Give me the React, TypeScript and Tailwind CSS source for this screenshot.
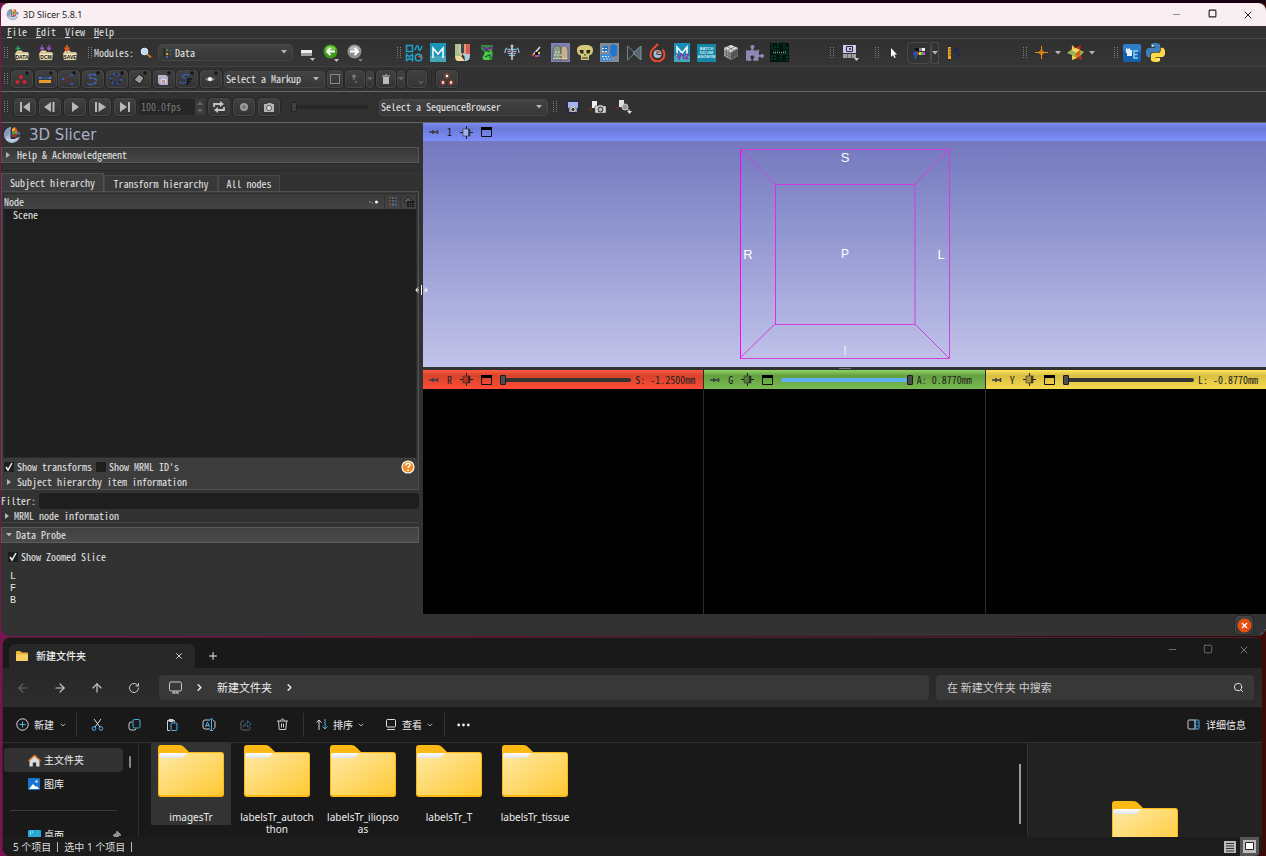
import React from "react";
import {
  ArrowLeft,
  ArrowRight,
  ArrowUp,
  ChevronDown,
  ChevronRight,
  Minus,
  Plus,
  RotateCw,
  Search,
  Square,
  X,
} from "lucide-react";
import { FaPuzzlePiece } from "react-icons/fa";

type Kids = { children?: React.ReactNode };

const Svg: React.FC<Kids & { w: number; h: number; vb?: string }> = ({ w, h, vb, children }) => (
  <svg width={w} height={h} viewBox={vb || `0 0 ${w} ${h}`} fill="none" className="shrink-0" aria-hidden="true">
    {children}
  </svg>
);

const Handle = () => (
  <Svg w={4} h={12}>
    <path d="M0.5 0v12M3.5 0v12" stroke="#7d7d7d" strokeDasharray="1 1" />
  </Svg>
);

const Caret: React.FC<{ color?: string }> = ({ color = "#b5b5b5" }) => (
  <Svg w={6} h={4}>
    <path d="M0 0h6L3 3.5z" fill={color} />
  </Svg>
);

/* ---------- logo ---------- */
const SlicerLogo: React.FC<{ size: number }> = ({ size }) => (
  <Svg w={size} h={size} vb="0 0 18 18">
    <path d="M8 1a8 8 0 1 0 9 9.5l-5 2.5H8z" fill="#a9b8d4" />
    <path d="M8 1a8 8 0 0 0-6.5 11L6 9z" fill="#8c9bbb" />
    <path d="M8 3v9l6-1" stroke="#2b3348" />
    <path d="M9 3l3-2v3.5L9 6z" fill="#f2b32c" />
    <path d="M12 1l2 2v3l-2-1.5z" fill="#d84228" />
    <path d="M9 6l3-1.5V8l-3 1.5z" fill="#4c9c3c" />
    <path d="M12 4.5h2.5V8H12z" fill="#e5702b" />
    <path d="M14.5 6H17v3h-2.5z" fill="#2f74c0" />
    <path d="M9.5 9.5L14 8.5v2l-4.500.5z" fill="#d12f2f" />
    <path d="M4 13c3 2 7 2 10-1" stroke="#e4eaf5" />
  </Svg>
);

/* ---------- first toolbar ---------- */
const Drawer: React.FC<{ label: string; children: React.ReactNode }> = ({ label, children }) => (
  <Svg w={16} h={16}>
    <path d="M2 7l1.5-1.5h4L9 7h5v8H2z" fill="#e9d9a8" />
    <path d="M1 8h14l-1 7H2z" fill="#f6ebc8" stroke="#8f7a48" strokeWidth="0.5" />
    <text x="8" y="13.5" fontSize="5" fontWeight="bold" fontFamily="Liberation Sans, sans-serif" textAnchor="middle" fill="#111">
      {label}
    </text>
    {children}
  </Svg>
);

const Magnifier = () => (
  <Svg w={12} h={12}>
    <path d="M7 7l4 3.5" stroke="#c87a2c" strokeWidth="2" />
    <circle cx="4.5" cy="4.5" r="3.3" fill="#b9dcf8" stroke="#e8eef6" />
  </Svg>
);

const WindowDrop = () => (
  <Svg w={16} h={18}>
    <path d="M2 6h11v6H2z" fill="#eee" />
    <path d="M2 9h11v3H2z" fill="#9c9c9c" />
    <path d="M11 14h5l-2.5 3z" fill="#c4c4c4" />
  </Svg>
);

const RoundArrow: React.FC<{ back?: boolean }> = ({ back }) => (
  <Svg w={16} h={18}>
    <circle cx="7.5" cy="7.5" r="7" fill={back ? "#3f9a1c" : "#8e8e8e"} />
    <path d="M2 5a6 5 0 0 1 11 0c-3 2-8 2-11 0z" fill={back ? "#7ccf4e" : "#b9b9b9"} />
    <path
      d={back ? "M12 7.500H4M7.500 4L4 7.500 7.500 11" : "M3 7.500h8M7.500 4L11 7.500 7.500 11"}
      stroke="#fff"
      strokeWidth="2"
    />
    <path d="M11 15h5l-2.5 3z" fill={back ? "#c4c4c4" : "#777"} />
  </Svg>
);

const ModuleShapes = () => (
  <Svg w={18} h={18}>
    <path
      d="M1.5 1.5h6v6h-6zM10 6c2-6 3-5 3.5-2s1.500 4 3.5-2M1.5 16.5v-6l3 2 3-2v6l-3-2z"
      stroke="#1ba3c9"
      strokeWidth="1.5"
    />
    <circle cx="13.5" cy="13.5" r="3.3" stroke="#1ba3c9" strokeWidth="1.5" />
    <path d="M13 13l2-2 1.5 1.5L15 14z" fill="#e0552c" />
  </Svg>
);

const MonaiLetter: React.FC<{ viz?: boolean }> = ({ viz }) => (
  <Svg w={16} h={19}>
    <path d="M0 0h16v19H0z" fill={viz ? "#178fb4" : "#1b95b5"} />
    <path d="M0 13h16v6H0z" fill="#44a6bb" />
    {viz ? (
      <>
        <path d="M3 13V4l5 6 5-6v9" stroke="#fff" strokeWidth="1.5" />
        <path d="M2.5 10L5 16l2.5-6M9.500 11v5M11.500 11.500h3l-3 4h3" stroke="#8d2fa0" strokeWidth="1.3" />
      </>
    ) : (
      <path d="M3 15V5l5 6 5-6v10" stroke="#fff" strokeWidth="1.5" />
    )}
  </Svg>
);

const BlocksU = () => (
  <Svg w={18} h={19}>
    <path d="M1 1h7v12H1z" fill="#a9c08f" />
    <path d="M9 1h7v12H9z" fill="#d9604b" />
    <path d="M1 13h6l4 5H4c-2 0-3-2-3-5z" fill="#f0d79c" />
    <path d="M10 11h6c0 5-1 7-5 7z" fill="#a9cfe0" />
    <path d="M6 1v10h5V1" stroke="#d8d2c6" />
    <path d="M7 1h3v9H7z" fill="#444" />
  </Svg>
);

const Pirate = () => (
  <Svg w={14} h={17}>
    <path d="M1 1h12v3l-1 2 1 3-1 7H3l-1-3 3-4-4-4z" fill="#2f8f3d" />
    <path d="M1 2l6 2 6-2-1 3-7 1z" fill="#6b2a9a" />
    <path d="M5 8l6-2 1 5-3 5H4l-1-2z" fill="#4fd03a" />
    <path d="M5 6l5 2M5 13l4-2M10 10v4" stroke="#1d3a6b" strokeWidth="1.2" />
    <path d="M9 5h2v1H9z" fill="#e23a2a" />
  </Svg>
);

const Torso = () => (
  <Svg w={16} h={17}>
    <path d="M3 4c-2 1-2 3-2 5M13 4c2 1 2 3 2 5" stroke="#9fb5c4" strokeWidth="1.2" />
    <path d="M3 4h10l-1 7-4 3-4-3z" fill="#33586b" />
    <path d="M3.5 5.5h9M3.500 7.500h9M4 9.500h8M5 11.500h6" stroke="#8fb3c6" />
    <path d="M8 1v15" stroke="#c4d3db" strokeWidth="1.5" />
    <path d="M6 6l2 2M10 8l-1 2" stroke="#c13a46" strokeWidth="1.5" />
    <circle cx="8" cy="2" r="1.5" fill="#b9ccd6" />
  </Svg>
);

const Pen = () => (
  <Svg w={12} h={14}>
    <path d="M3 9l7-8" stroke="#e4e4e4" strokeWidth="1.5" />
    <path d="M1 9l3-1-1 3z" fill="#c23c3c" />
    <path d="M5 6h3v3H5z" fill="#111" />
    <path d="M8 6h2v2H8z" fill="#e5c12c" />
    <path d="M5 9h3v2H5z" fill="#cc4d7b" />
    <path d="M8 8h2v3H8z" fill="#3b57c5" />
  </Svg>
);

const Tombs = () => (
  <Svg w={19} h={19}>
    <path d="M0 0h19v19H0z" fill="#8180bd" />
    <path d="M2 17V7c0-6 8-6 8 0v10z" fill="#8b9c86" stroke="#56605a" />
    <path d="M10 17V6c1-5 7-4 7 2v9z" fill="#c5b28c" stroke="#6b6450" />
    <path d="M4 9h5M3 12h8M2 15.5h15" stroke="#dfe3d8" strokeDasharray="2 1" />
  </Svg>
);

const Skull = () => (
  <Svg w={18} h={17}>
    <path d="M9 1C3 1 1 3 1 6c0 4 2 5 4 5.5V16h8v-4.500C15 11 17 10 17 6c0-3-2-5-8-5z" fill="#d3c87c" />
    <path d="M3.500 6h4v3.500h-3zM10.500 6h4l-1 3.500h-3zM9 9.500l1 2H8zM6 13.500h6v1H6z" fill="#2b2a1a" />
  </Svg>
);

const BluePatch = () => (
  <Svg w={19} h={19}>
    <path d="M0 0h19v19H0z" fill="#7f8c98" />
    <path d="M3 3h5v5H3zM10 3l3-2 4 2v9l-4 2-3-3z" fill="#2173cf" />
    <path d="M1 11h10v7H1z" fill="#3c8ad8" />
    <path d="M2 5.5h6M2 8.500h5M2 13.500h7M3 16h7" stroke="#dce6ee" strokeDasharray="2 1" />
  </Svg>
);

const Bowtie = () => (
  <Svg w={16} h={16}>
    <path d="M1.5 1v14L9 8z" stroke="#73838d" />
    <path d="M15 1L7 8l8 7z" fill="#56666f" stroke="#8294a0" />
  </Svg>
);

const Flame = () => (
  <Svg w={17} h={19}>
    <path d="M9 1L4 6a7 7 0 1 0 9.500.5" stroke="#ee4c2c" strokeWidth="2" />
    <circle cx="8.5" cy="11" r="4" fill="#aeb9cd" />
    <path d="M8 8v3.5h4" stroke="#333b50" />
    <path d="M9 8h2v2H9z" fill="#de5b2f" />
  </Svg>
);

const BatchTile = () => (
  <Svg w={19} h={18}>
    <path d="M0 0h19v18H0z" fill="#1586a8" />
    <g fontSize="4" fontWeight="bold" fontFamily="Liberation Sans, sans-serif" textAnchor="middle" fill="#d5eef5">
      <text x="9.5" y="6">BATCH</text>
      <text x="9.5" y="10">DICOM</text>
      <text x="9.5" y="14">ANONYM</text>
    </g>
  </Svg>
);

const GrayCube = () => (
  <Svg w={16} h={17}>
    <path d="M8 1l7 3v8l-7 4-7-4V4z" fill="#a9a9a9" />
    <path d="M8 8l7-4v8l-7 4z" fill="#6c6c6c" />
    <path d="M8 1l7 3-7 4-7-4z" fill="#dadada" />
    <path
      d="M1 7l7 4 7-4M1 9.5L8 13.500l7-4M3.500 5.500v8M6 7v8M10.500 7v8M13 5v8M4 2.500l7 4M12 2.500l-7 4M8 8v8"
      stroke="#333"
      strokeWidth="0.5"
    />
  </Svg>
);

const MatrixTile = () => (
  <Svg w={19} h={19}>
    <path d="M0 0h19v19H0z" fill="#03150f" />
    <path d="M2 1v6M5 3v14M8 0v8M11 11v7M14 1v12M17 4v14M2 12v6" stroke="#0b5640" strokeDasharray="2 1" />
    <path d="M3 9.5h13" stroke="#7d9a90" strokeDasharray="1 1" strokeWidth="1.5" />
  </Svg>
);

const LayoutIcon = () => (
  <Svg w={17} h={17}>
    <path d="M1 1h13v8H1z" fill="#c9c9ee" />
    <path d="M4.5 2.5h6v5h-6z" stroke="#2a2a3a" />
    <path d="M7 4h2v2H7z" fill="#444" />
    <path d="M1 10h4v4H1zM5.5 10h4v4h-4zM10 10h4v4h-4z" fill="#9f9f9f" />
    <path d="M12 14h5l-2.5 3z" fill="#d0d0d0" />
  </Svg>
);

const Pointer = () => (
  <Svg w={12} h={12}>
    <path d="M4 1v9l2-2 1.5 3 1.200-.6L7.300 7.500H10z" fill="#fff" />
  </Svg>
);

const WindowLevel = () => (
  <Svg w={12} h={12}>
    <path d="M2 1h10v3H2z" fill="#111" />
    <path d="M6 1h3v3H6z" fill="#888" />
    <path d="M9 1h3v3H9z" fill="#eee" />
    <path d="M4 5h2v3H4z" fill="#e22" />
    <path d="M6 5h2v3H6z" fill="#dd2" />
    <path d="M8 5h2v3H8z" fill="#2c5" />
    <path d="M10 5h2v3h-2z" fill="#d3d" />
    <path d="M2.5 12V6M0 8l2.500-3L5 8" stroke="#2b57c9" strokeWidth="1.5" />
  </Svg>
);

const RulerCurve = () => (
  <Svg w={14} h={14}>
    <path d="M1 1h3v12H1z" fill="#e8a331" />
    <path d="M2 3h2M2 6h2M2 9h2" stroke="#7a4e0c" />
    <path d="M12 3C8 1 6 5 9 6s5 4 0 5" stroke="#1b2268" strokeWidth="1.5" strokeDasharray="2 1" />
  </Svg>
);

const Crosshair = () => (
  <Svg w={13} h={13}>
    <path d="M6.5 0v13M0 6.5h13" stroke="#ef8a12" />
    <circle cx="6.5" cy="6.5" r="2" stroke="#ef8a12" />
  </Svg>
);

const StarIcon = () => (
  <Svg w={17} h={17}>
    <path d="M5 1l3 3 6-3-1 5 4 2-3 3 1 5-5-2-5 2v-5L0 9l4-3z" fill="#c3281f" />
    <path d="M0 9l4-3 4-2 5 2 4 2-3 3-5 3-4-3z" fill="#8fb651" />
    <path d="M5 1l3 3-3 3zM10 14l-5 2v-5z" fill="#e8d14b" />
    <path d="M5 6l4-2 4 2-4 3z" fill="#f0d964" />
    <path d="M9 9l4-3v5l-4 2z" fill="#e1571f" />
  </Svg>
);

const Extension = () => (
  <Svg w={18} h={18}>
    <rect width="18" height="18" rx="2" fill="#1560ae" />
    <rect width="18" height="8" rx="2" fill="#2f7cc8" />
    <path d="M3 4l2 1 2-1v2h2v6H4V9H3z" fill="#e4edf6" />
    <path d="M15 7h-4v7h4M11 10.500h3.500" stroke="#7fd6e8" strokeWidth="1.5" />
  </Svg>
);

const snake =
  "M14.25.18l.9.2.73.26.59.3.45.32.34.34.25.34.16.33.1.3.04.26.02.2-.01.13V8.5l-.05.63-.13.55-.21.46-.26.38-.3.31-.33.25-.35.19-.35.14-.33.1-.3.07-.26.04-.21.02H8.77l-.69.05-.59.14-.5.22-.41.27-.33.32-.27.35-.2.36-.15.37-.1.35-.07.32-.04.27-.02.21v3.06H3.17l-.21-.03-.28-.07-.32-.12-.35-.18-.36-.26-.36-.36-.35-.46-.32-.59-.28-.73-.21-.88-.14-1.05-.05-1.23.06-1.22.16-1.04.24-.87.32-.71.36-.57.4-.44.42-.33.42-.24.4-.16.36-.1.32-.05.24-.01h.16l.06.01h8.16v-.83H6.18l-.01-2.75-.02-.37.05-.34.11-.31.17-.28.25-.26.31-.23.38-.2.44-.18.51-.15.58-.12.64-.1.71-.06.77-.04.84-.02 1.27.05z";

const PythonIcon = () => (
  <Svg w={19} h={19} vb="0 0 24 24">
    <path d={snake} fill="#3f7fb5" />
    <path d={snake} fill="#ffd848" transform="rotate(180 12 12)" />
    <circle cx="8.5" cy="3.2" r="1.1" fill="#fff" />
    <circle cx="15.5" cy="20.8" r="1.1" fill="#fff" />
  </Svg>
);

/* ---------- second toolbar ---------- */
const markups: { name: string; art: React.ReactNode }[] = [
  {
    name: "Point list",
    art: (
      <g fill="#d8232c">
        <circle cx="7" cy="6" r="2" />
        <circle cx="3.5" cy="11" r="2" />
        <circle cx="10.5" cy="11" r="2" />
      </g>
    ),
  },
  {
    name: "Line",
    art: (
      <>
        <path d="M1 9h12v3H1z" fill="#e89b28" />
        <path d="M2 7h10" stroke="#2c62c8" />
        <path d="M1 6h2v2H1zM11 6h2v2h-2z" fill="#3f7ff0" />
      </>
    ),
  },
  {
    name: "Angle",
    art: (
      <>
        <path d="M11 4L3 8l8 5" stroke="#8c2f3c" strokeDasharray="2 1" />
        <path d="M10 3h2v2h-2zM1 7h2v2H1zM10 12h2v2h-2z" fill="#2d5fd6" />
      </>
    ),
  },
  {
    name: "Open curve",
    art: (
      <>
        <path d="M11 4C4 2 1 6 6 7s8 2 4 5-7 1-8 0" stroke="#666" />
        <path d="M11 4C4 2 1 6 6 7s8 2 4 5-7 1-8 0" stroke="#2d66dc" strokeWidth="2" strokeDasharray="2 3" />
      </>
    ),
  },
  {
    name: "Closed curve",
    art: (
      <>
        <circle cx="7" cy="8" r="5" stroke="#222" />
        <circle cx="7" cy="8" r="5" stroke="#2d55d0" strokeWidth="2" strokeDasharray="2 3" />
      </>
    ),
  },
  { name: "Plane", art: <path d="M7 3l5 4-4 6-6-4z" fill="#9a9a9a" stroke="#151515" /> },
  {
    name: "ROI",
    art: (
      <>
        <path d="M2 4h8l2 2v8H4l-2-2z" fill="#b9b3c9" />
        <path d="M4 7h7v6H4z" fill="#d9d3df" stroke="#9aa0c4" />
        <path d="M6 9h3v3H6z" fill="#c98f8f" />
      </>
    ),
  },
  {
    name: "Landmark curve",
    art: (
      <>
        <path d="M10 4C4 2 1 6 5 7s4 2 2 4-5 1-6 0" stroke="#2d66dc" strokeWidth="1.5" strokeDasharray="2 1" />
        <path d="M8.5 14V8H13M9 10.500h3" stroke="#111" strokeWidth="1.5" />
      </>
    ),
  },
  {
    name: "Eye",
    art: (
      <>
        <path d="M2 8c3-2 7-2 10 0-3 3-7 3-10 0z" fill="#8a8a8a" />
        <circle cx="7" cy="8" r="2" fill="#fff" />
      </>
    ),
  },
];

const toolBtn =
  "flex items-center justify-center rounded-sm border border-[#474747] bg-linear-to-b from-[#414141] to-[#343434] shadow-[0_0_0_1px_#262626]";

const pixelText = "font-['Noto_Sans_CJK_SC','Liberation_Mono',monospace] text-[10px] leading-3 [font-feature-settings:'hwid']";

const Tool: React.FC<Kids & { label: string; w?: string }> = ({ label, w = "w-[22px]", children }) => (
  <button aria-label={label} className={`${toolBtn} ${w} h-[18px] shrink-0`}>
    {children}
  </button>
);

const Combo: React.FC<{ label: string; value: string; width: string; pad?: string; icon?: React.ReactNode }> = ({
  label,
  value,
  width,
  pad = "pl-0.5",
  icon,
}) => (
  <div className={`relative ${width} shrink-0`}>
    {icon && <span className="absolute left-1 top-0.5">{icon}</span>}
    <select
      aria-label={label}
      className={`${pad} block h-[17px] w-full appearance-none rounded-sm border border-[#474747] bg-linear-to-b from-[#434343] to-[#373737] text-[#e6e6e6] ${pixelText}`}
    >
      <option>{value}</option>
    </select>
    <span className="pointer-events-none absolute right-1.5 top-1.5">
      <Caret />
    </span>
  </div>
);

const playback: { name: string; d: string }[] = [
  { name: "First frame", d: "M1 1h2v10H1zM11 1v10L4 6z" },
  { name: "Previous frame", d: "M7 1v10L0 6zM8.5 1h2v10h-2z" },
  { name: "Play", d: "M3 1v10l7-5z" },
  { name: "Next frame", d: "M1 1h2v10H1zM4.5 1v10L12 6z" },
  { name: "Last frame", d: "M1 1v10l7-5zM9 1h2v10H9z" },
];

/* ---------- view headers ---------- */
const Pin = () => (
  <Svg w={10} h={8}>
    <path d="M0 4h4M4 2v4M4 4h4M8.5 2v4" stroke="#3b3b42" strokeWidth="1.5" />
  </Svg>
);

const Target: React.FC<{ fill: string }> = ({ fill }) => (
  <Svg w={13} h={13}>
    <path d="M6.5 0v13M0 6.500h13" stroke="#1d1d24" />
    <path d="M3 3h7v7H3z" fill={fill} stroke="#2e2e2e" strokeOpacity="0.6" />
    <path d="M8 3h2v7H8z" fill="#1c1c1c" fillOpacity="0.7" />
  </Svg>
);

const Maximize = () => (
  <Svg w={11} h={10}>
    <path d="M0.5 0.5h10v9h-10z" stroke="#111" />
    <path d="M0 0h11v3H0z" fill="#000" />
  </Svg>
);

const slices = [
  { id: "R", bar: "from-[#ff5a43] via-[#d8432c] to-[#ff4d36]", tone: "#b43120", label: "S: -1.2500mm", full: false },
  { id: "G", bar: "from-[#8ed463] via-[#649f40] to-[#78bb52]", tone: "#4f7f33", label: "A: 0.8770mm", full: true },
  { id: "Y", bar: "from-[#ffe65c] via-[#d8bf42] to-[#f7da4e]", tone: "#ad9838", label: "L: -0.8770mm", full: false },
];

const rangeBase =
  "h-3 min-w-0 flex-1 appearance-none bg-transparent [&::-webkit-slider-runnable-track]:h-1 [&::-webkit-slider-runnable-track]:rounded-full [&::-webkit-slider-thumb]:-mt-[3px] [&::-webkit-slider-thumb]:h-2.5 [&::-webkit-slider-thumb]:w-1.5 [&::-webkit-slider-thumb]:appearance-none [&::-webkit-slider-thumb]:rounded-[1px] [&::-webkit-slider-thumb]:border [&::-webkit-slider-thumb]:border-[#1c1c1c] [&::-webkit-slider-thumb]:bg-[#4d4d4d]";

const Check: React.FC<{ label: string; on?: boolean }> = ({ label, on }) => (
  <label className="flex items-center gap-[3px]">
    <span className="relative flex size-2.5">
      <input type="checkbox" defaultChecked={on} className="peer size-2.5 appearance-none bg-[#1e1e1e]" />
      <svg viewBox="0 0 10 10" fill="none" className="absolute inset-0 hidden peer-checked:block">
        <path d="M2 5l2 3 4-7" stroke="#eee" strokeWidth="1.5" />
      </svg>
    </span>
    {label}
  </label>
);

const Side = () => (
  <Svg w={5} h={6}>
    <path d="M0 0v6l4-3z" fill="#b5b5b5" />
  </Svg>
);

const LeftPanel = () => (
  <div className="flex w-[422px] shrink-0 flex-col pr-1">
    <div className="flex h-6 items-center gap-2 pl-0.5">
      <SlicerLogo size={18} />
      <h1 className="font-['DejaVu_Sans',sans-serif] text-[15px] leading-5 text-[#a7b0c6]">3D Slicer</h1>
    </div>
    <button className="flex h-4 items-center gap-1.5 border border-[#585858] bg-linear-to-b from-[#373737] to-[#464646] pl-1">
      <Side /> Help &amp; Acknowledgement
    </button>
    <div className="mb-0.5 h-2 border border-[#2a2a2a]" />

    <div role="tablist" className="flex items-end">
      <button role="tab" aria-selected="true" className="h-[18px] w-[103px] border border-b-0 border-[#535353] bg-[#3d3d3d]">
        Subject hierarchy
      </button>
      <button role="tab" className="h-4 w-[114px] border border-b-0 border-[#484848] bg-[#383838]">
        Transform hierarchy
      </button>
      <button role="tab" className="h-4 w-[62px] border border-b-0 border-[#484848] bg-[#383838]">
        All nodes
      </button>
    </div>
    <div className="flex flex-col border border-[#505050] bg-[#3c3c3c] p-px">
      <div className="h-[265px] border border-[#2c2c2c] bg-[#1e1e1e]">
        <table className="w-full">
          <thead>
            <tr className="h-[15px] bg-linear-to-b from-[#3a3a3a] to-[#444]">
              <th className="p-0 text-left font-normal">Node</th>
              <th className="w-4 p-0" aria-label="Visibility">
                <Svg w={12} h={6}>
                  <path d="M1 3h2M4 4h1" stroke="#999" />
                  <circle cx="8.5" cy="3" r="1.5" fill="#fff" />
                </Svg>
              </th>
              <th className="w-4 border-l border-[#333] p-0 pl-1" aria-label="Color">
                <Svg w={8} h={9}>
                  <path d="M1 0v9" stroke="#8a3a48" strokeWidth="2" />
                  <path d="M4 0v9" stroke="#377a60" strokeWidth="2" />
                  <path d="M7 0v9" stroke="#5a4c9c" strokeWidth="2" />
                  <path d="M0 2.5h8M0 5.500h8" stroke="#333" />
                </Svg>
              </th>
              <th className="w-4 border-l border-[#333] p-0 pl-0.5" aria-label="Transform">
                <Svg w={12} h={11}>
                  <path d="M5 1l5 4-5 4-4-4z" fill="#555" stroke="#222" />
                  <path d="M4 5h7v6H4z" fill="#111" />
                  <path d="M4 7.5h7M4 9.500h7M6.500 5v6M8.500 5v6" stroke="#555" strokeWidth="0.5" />
                </Svg>
              </th>
            </tr>
          </thead>
          <tbody>
            <tr className="h-3">
              <td colSpan={4} className="p-0 pl-[9px] leading-[10px]">
                Scene
              </td>
            </tr>
          </tbody>
        </table>
      </div>
      <div className="flex h-[17px] items-center gap-1 pr-0.5 pl-px">
        <Check label="Show transforms" on />
        <Check label="Show MRML ID's" />
        <button aria-label="Help" className="ml-auto flex">
          <Svg w={14} h={14}>
            <circle cx="7" cy="7" r="6" fill="#f28c1e" stroke="#fff" strokeWidth="1.2" />
            <path d="M5 5.5c0-3 4-3 4-.5 0 1.500-2 1.500-2 3M7 9.500V11" stroke="#fff" strokeWidth="1.5" />
          </Svg>
        </button>
      </div>
      <button className="flex h-[13px] items-center gap-[5px] pl-1">
        <Side /> Subject hierarchy item information
      </button>
    </div>
    <div className="flex items-center gap-[3px] pt-[3px]">
      <label htmlFor="filter">Filter:</label>
      <input id="filter" className="h-4 min-w-0 flex-1 rounded-sm bg-[#1e1e1e] px-1 outline-none" />
    </div>
    <button className="mb-1 flex h-3.5 items-center gap-1 border-b border-[#444] pl-1">
      <Side /> MRML node information
    </button>
    <button className="flex h-4 items-center gap-1 border border-[#5c5c5c] bg-linear-to-b from-[#404040] to-[#4b4b4b] pl-1">
      <Caret /> Data Probe
    </button>
    <div className="pt-2 pl-[7px]">
      <Check label="Show Zoomed Slice" on />
      <ul className="pt-2 pl-0.5 font-['Liberation_Mono',monospace]">
        <li>L</li>
        <li>F</li>
        <li>B</li>
      </ul>
    </div>
  </div>
);

const Cube = () => (
  <Svg w={212} h={212}>
    <g stroke="#cf3fdc">
      <path d="M1 1.5h209.500v209H1.500M36 36.500h140v140H36M1 1l35 35M210 1l-34 35M1 210l35-34M210 210l-34-34" />
      <path d="M36.5 36v140" stroke="#e82ae8" />
      <path d="M1.5 1v210" stroke="#ff00ff" />
    </g>
    <g fill="#fff" fontFamily="Liberation Sans, sans-serif" fontSize="13" textAnchor="middle">
      <text x="106" y="14">S</text>
      <text x="9" y="111">R</text>
      <text x="106" y="110" fontSize="12">P</text>
      <text x="202" y="111">L</text>
      <text x="106" y="207" fillOpacity="0.7">I</text>
    </g>
  </Svg>
);

const Views = () => (
  <div className="flex min-w-0 flex-1 flex-col">
    <div className="flex h-[18px] items-center gap-2 bg-linear-to-b from-[#7b8cf5] via-[#6a7ad8] via-30% to-[#7f8ffb] pl-1.5 text-[#111]">
      <Pin />
      <span>1</span>
      <Target fill="#9fb0f0" />
      <Maximize />
    </div>
    <div className="flex h-[226px] justify-center bg-linear-to-b from-[#7478be] to-[#c2c4ea] pt-[7px]">
      <Cube />
    </div>
    <div className="flex h-[3px] items-center justify-center bg-[#323232]">
      <span className="h-px w-3 bg-[#777]" />
    </div>
    <div className="grid grid-cols-3 gap-px bg-[#2c2c2c]">
      {slices.map((s) => (
        <div key={s.id} className="min-w-0 bg-black">
          <div className={`flex h-[19px] items-center gap-2 bg-linear-to-b via-30% pr-2 pl-1.5 text-[#222] ${s.bar}`}>
            <Pin />
            <span>{s.id}</span>
            <Target fill={s.tone} />
            <Maximize />
            <label className="flex min-w-0 flex-1 items-center gap-1">
              <input
                type="range"
                defaultValue={s.full ? 100 : 0}
                className={`${rangeBase} ${
                  s.full
                    ? "[&::-webkit-slider-runnable-track]:bg-[#5eb0f2]"
                    : "[&::-webkit-slider-runnable-track]:bg-[#333]"
                }`}
              />
              <span className="w-[60px] whitespace-nowrap">{s.label}</span>
            </label>
          </div>
          <div className="h-[225px]" />
        </div>
      ))}
    </div>
  </div>
);

const SlicerWindow = () => (
  <section className={`flex flex-col overflow-hidden rounded-lg bg-[#323232] text-[#e4e4e4] ${pixelText}`}>
    <header className="flex h-[23px] shrink-0 items-center gap-1 bg-[#f9eff2] pl-[5px] font-['Noto_Sans',sans-serif] text-[#222] [font-feature-settings:normal]">
      <SlicerLogo size={13} />
      <span className="text-[9px]">3D Slicer 5.8.1</span>
      <div className="ml-auto flex">
        <button aria-label="Minimize" className="flex w-9 justify-center text-[#888]">
          <Minus size={11} />
        </button>
        <button aria-label="Maximize" className="flex w-9 justify-center">
          <Square size={9} strokeWidth={3} />
        </button>
        <button aria-label="Close" className="flex w-9 justify-center">
          <X size={12} strokeWidth={2} />
        </button>
      </div>
    </header>
    <nav className="flex h-[13px] shrink-0 items-center gap-[9px] border-b border-[#464646] pl-1.5">
      {["File", "Edit", "View", "Help"].map((m) => (
        <button key={m}>
          <span className="underline">{m[0]}</span>
          {m.slice(1)}
        </button>
      ))}
    </nav>

    <div className="grid h-7 shrink-0 grid-cols-[393px_433px_45px_148px_91px_1fr] items-center border-b border-[#404040] bg-linear-to-b from-[#303030] to-[#363636] pl-[3px]">
      <div className="flex items-center gap-1.5">
        <Handle />
        <div className="flex gap-2 pr-1">
          <button aria-label="Add data">
            <Drawer label="DATA">
              <path d="M4 1v5M1.5 3.500h5" stroke="#2da457" strokeWidth="1.5" />
            </Drawer>
          </button>
          <button aria-label="Add DICOM">
            <Drawer label="DCM">
              <path d="M4 0v4M2 2.5L4 5l2-2.500M11 0v4M9 2.500L11 5l2-2.500" stroke="#9b4fc8" strokeWidth="1.3" />
            </Drawer>
          </button>
          <button aria-label="Save data">
            <Drawer label="SAVE">
              <path d="M5 0v4M2.5 2.500L5 5.500l2.500-3" stroke="#e8591f" strokeWidth="1.8" />
            </Drawer>
          </button>
        </div>
        <div className="flex items-center gap-0.5">
          <Handle />
          <span>Modules:</span>
        </div>
        <button aria-label="Find module">
          <Magnifier />
        </button>
        <Combo
          label="Module"
          value="Data"
          width="w-[135px]"
          pad="pl-4"
          icon={
            <Svg w={10} h={12}>
              <path d="M2 1v10M2 4h4M2 8h4" stroke="#222" />
              <path d="M1 0h2v2H1z" fill="#444" />
              <path d="M4 3h2v2H4z" fill="#3a8f5a" />
              <path d="M4 7h2v2H4z" fill="#e7a31e" />
              <path d="M7 4h3v1H7zM7 8h3v1H7z" fill="#555" />
              <path d="M4 10h2v2H4z" fill="#36c" />
            </Svg>
          }
        />
        <div className="flex items-center gap-2">
          <button aria-label="Module history"><WindowDrop /></button>
          <button aria-label="Back"><RoundArrow back /></button>
          <button aria-label="Forward"><RoundArrow /></button>
        </div>
      </div>
      <div className="flex items-center gap-[3px]">
        <Handle />
        <div className="flex w-[386px] items-center justify-between">
          {[
            <ModuleShapes />, <MonaiLetter />, <BlocksU />, <Pirate />, <Torso />, <Pen />, <Tombs />, <Skull />,
            <BluePatch />, <Bowtie />, <Flame />, <MonaiLetter viz />, <BatchTile />, <GrayCube />,
            <FaPuzzlePiece size={18} color="#8c89b4" />, <MatrixTile />,
          ].map((icon, i) => (
            <button key={i} aria-label={`Module ${i + 1}`} className="flex w-5 justify-center">
              {icon}
            </button>
          ))}
        </div>
      </div>
      <div className="flex items-center gap-2">
        <Handle />
        <button aria-label="Layout"><LayoutIcon /></button>
      </div>
      <div className="flex items-center gap-2">
        <Handle />
        <button aria-label="Select"><Pointer /></button>
        <div className="flex h-[22px]">
          <button aria-label="Window level" className="flex w-6 items-center justify-center rounded-sm border border-[#494949]">
            <WindowLevel />
          </button>
          <button aria-label="Window level options" className="flex w-2 items-center justify-center border border-[#494949]">
            <Caret />
          </button>
        </div>
        <button aria-label="Markup mode"><RulerCurve /></button>
      </div>
      <div className="flex items-center gap-1">
        <Handle />
        <button aria-label="Crosshair" className="flex w-5 justify-center"><Crosshair /></button>
        <Caret />
        <button aria-label="Slice intersections" className="flex w-5 justify-center"><StarIcon /></button>
        <Caret />
      </div>
      <div className="flex items-center gap-[5px]">
        <Handle />
        <button aria-label="Extensions"><Extension /></button>
        <button aria-label="Python console"><PythonIcon /></button>
      </div>
    </div>

    <div className="flex h-6 shrink-0 items-center gap-0.5 pl-[3px]">
      <div className="w-[5px]"><Handle /></div>
      <div className="flex w-[211px] justify-between">
        {markups.map((m) => (
          <Tool key={m.name} label={m.name}>
            <Svg w={16} h={16}>
              {m.art}
              <path d="M13 0v4M11 2h4" stroke="#0c0c0c" strokeWidth="1.2" />
            </Svg>
          </Tool>
        ))}
      </div>
      <Combo label="Markup" value="Select a Markup" width="w-[101px]" pad="pl-px" />
      <Tool label="Markup color" w="w-4">
        <span className="size-2.5 border border-[#888]" />
      </Tool>
      <div className="flex gap-px">
        <Tool label="Place" w="w-5">
          <Svg w={8} h={10}>
            <path d="M3 1v5M1 3l2-2 2 2M4 8h2" stroke="#777" strokeWidth="1.5" />
          </Svg>
        </Tool>
        <Tool label="Place options" w="w-2"><Caret color="#666" /></Tool>
      </div>
      <div className="flex gap-px">
        <Tool label="Delete" w="w-5">
          <Svg w={8} h={10}>
            <path d="M0 2h8M3 1h2" stroke="#bbb" />
            <path d="M1 3h6v7H1z" fill="#bbb" />
          </Svg>
        </Tool>
        <Tool label="Delete options" w="w-2"><Caret color="#666" /></Tool>
      </div>
      <Tool label="More" w="w-5">
        <span className="mt-2 ml-2"><Caret color="#555" /></span>
      </Tool>
      <span className="mx-0.5 h-4 w-px bg-[#282828]" />
      <Tool label="Fiducials">
        <Svg w={14} h={13}>
          <path
            d="M7 0v6M4.5 1.500l5 3M9.500 1.500l-5 3M3 6.500v6M.5 8l5 3M5.500 8l-5 3M11 6.500v6M8.500 8l5 3M13.500 8l-5 3"
            stroke="#e0583a"
          />
          <path d="M6 2h2v2H6zM2 8.500h2v2H2zM10 8.500h2v2h-2z" fill="#fff" />
        </Svg>
      </Tool>
    </div>

    <div className="flex h-[31px] shrink-0 items-center gap-[3px] border-t border-[#666] bg-[#313131] pl-[3px]">
      <div className="w-[7px]"><Handle /></div>
      {playback.map((p) => (
        <Tool key={p.name} label={p.name}>
          <Svg w={12} h={12}>
            <path d={p.d} fill="#b8b8b8" />
          </Svg>
        </Tool>
      ))}
      <div className="flex h-4 w-[66px] shrink-0 items-center justify-between bg-[#262626] pl-0.5 text-[#777]">
        <input aria-label="Frame rate" defaultValue="100.0fps" className="w-12 bg-transparent outline-none" />
        <span className="flex h-4 w-2.5 flex-col items-center justify-center gap-1 bg-[#3b3b3b]">
          <span className="rotate-180"><Caret color="#666" /></span>
          <Caret color="#666" />
        </span>
      </div>
      <Tool label="Loop">
        <Svg w={12} h={12}>
          <path d="M1 6V3h7M11 6v3H4" stroke="#c4c4c4" strokeWidth="1.8" />
          <path d="M7 0l4 3-4 3zM5 6L1 9l4 3z" fill="#c4c4c4" />
        </Svg>
      </Tool>
      <Tool label="Record">
        <Svg w={10} h={10}>
          <circle cx="5" cy="5" r="4" fill="#999" />
          <circle cx="5" cy="5" r="1.5" fill="#666" />
        </Svg>
      </Tool>
      <Tool label="Snapshot">
        <Svg w={12} h={10}>
          <path d="M1 2h3l1-1h3l1 1h2v8H1z" fill="#b5b5b5" />
          <circle cx="6" cy="6" r="2.5" fill="#ddd" stroke="#555" />
        </Svg>
      </Tool>
      <div className="flex w-[93px] shrink-0 px-2">
        <input
          type="range"
          aria-label="Sequence position"
          defaultValue={0}
          disabled
          className={`${rangeBase} opacity-60 [&::-webkit-slider-runnable-track]:h-0.5 [&::-webkit-slider-runnable-track]:bg-[#222]`}
        />
      </div>
      <Combo label="Sequence browser" value="Select a SequenceBrowser" width="w-[169px]" pad="pl-px" />
      <div className="flex items-center gap-2.5 pl-0.5">
        <Handle />
        <button aria-label="Screenshot">
          <Svg w={12} h={12}>
            <path d="M0 0h12v12H0z" fill="#23294a" />
            <path d="M1 1h10v6H1z" fill="#a9b2ea" />
            <path d="M2 6h8v5H2z" fill="#999" />
            <circle cx="6" cy="8.5" r="2" fill="#222" stroke="#ddd" />
          </Svg>
        </button>
        <button aria-label="Capture scene">
          <Svg w={17} h={13}>
            <path d="M3 0h5v7H3z" fill="#eee" />
            <path d="M0 7l3-2v5H0z" fill="#5c2f2f" />
            <path d="M6 5h3l1-1h3l1 1h3v7H6z" fill="#d8d8d8" stroke="#444" strokeWidth="0.5" />
            <circle cx="11.5" cy="8.5" r="2.5" fill="#bbb" stroke="#222" />
          </Svg>
        </button>
        <button aria-label="Scene views">
          <Svg w={17} h={14}>
            <path d="M3 0h5v7H3z" fill="#dfe2ea" />
            <path d="M0 7l3-2v4H0z" fill="#5c2f2f" />
            <circle cx="9" cy="7" r="3" fill="#999" stroke="#ccc" />
            <path d="M11 9l3 2" stroke="#aaa" strokeWidth="1.5" />
            <path d="M11 11h5l-2.5 3z" fill="#ddd" />
          </Svg>
        </button>
      </div>
    </div>

    <div className="relative flex border-t border-[#666]">
      <LeftPanel />
      <Views />
      {/* resize cursor on the splitter */}
      <span className="absolute top-[161px] left-[414px]">
        <Svg w={13} h={12}>
          <path d="M4 6H1M3 3.5L.8 6 3 8.500M9 6h3M10 3.500L12.200 6 10 8.500M6.500 1v10" stroke="#fff" />
        </Svg>
      </span>
    </div>
    <footer className="flex h-[22px] shrink-0 items-center justify-end gap-1.5">
      <button aria-label="Error log" className={`${toolBtn} size-[18px]`}>
        <Svg w={15} h={15}>
          <circle cx="7.5" cy="7.5" r="7" fill="#e6500f" />
          <path d="M5 5l5 5M10 5l-5 5" stroke="#fff" strokeWidth="1.3" />
        </Svg>
      </button>
      <span className="self-end">
        <Svg w={7} h={8}>
          <path d="M7 1L0 8M7 4L3 8" stroke="#888" strokeDasharray="1 1" />
        </Svg>
      </span>
    </footer>
  </section>
);

/* ---------- file explorer ---------- */
const Folder = () => (
  <svg viewBox="0 0 66 52" className="w-[66px]" aria-hidden="true">
    <defs>
      <linearGradient id="paper" x1="0" y1="0" x2="1" y2="1">
        <stop offset="0" stopColor="#ffe9a6" />
        <stop offset="1" stopColor="#ffc933" />
      </linearGradient>
      <linearGradient id="sheet" x1="0" y1="0" x2="0" y2="1">
        <stop offset="0" stopColor="#fff" />
        <stop offset="1" stopColor="#dcdde2" />
      </linearGradient>
    </defs>
    <path d="M0 3a3 3 0 0 1 3-3h18c3 0 4 1 6 3l4 4h32a3 3 0 0 1 3 3v39a3 3 0 0 1-3 3H3a3 3 0 0 1-3-3z" fill="#fcb813" />
    <path d="M1 10a2 2 0 0 1 2-2h27l-4 6H1z" fill="url(#sheet)" />
    <path d="M1 13h22c3 0 4-5 8-5h32a2 2 0 0 1 2 2v38a2 2 0 0 1-2 2H3a2 2 0 0 1-2-2z" fill="url(#paper)" />
  </svg>
);

const commands: { name: string; art: React.ReactNode }[] = [
  {
    name: "剪切",
    art: (
      <>
        <path d="M3 1l6 8M10 1L4 9" stroke="#ddd" />
        <circle cx="3" cy="10.5" r="1.8" stroke="#4cb3ea" />
        <circle cx="10" cy="10.5" r="1.8" stroke="#4cb3ea" />
      </>
    ),
  },
  {
    name: "复制",
    art: (
      <>
        <rect x="5" y="1.5" width="7" height="8.5" rx="1.5" stroke="#4cb3ea" />
        <path d="M4 4H3a2 2 0 0 0-2 2v4a2 2 0 0 0 2 2h3a2 2 0 0 0 2-1" stroke="#ccc" />
      </>
    ),
  },
  {
    name: "粘贴",
    art: (
      <>
        <path d="M5 12.5H2.500v-10h7V4M4 1.500h4v2H4z" stroke="#ccc" />
        <rect x="6" y="5" width="6" height="7.5" rx="1" stroke="#4cb3ea" />
      </>
    ),
  },
  {
    name: "重命名",
    art: (
      <>
        <path d="M8 11H3a2 2 0 0 1-2-2V4a2 2 0 0 1 2-2h5M11 2.5c1 0 2 .5 2 1.500v5c0 1-1 2-2 2" stroke="#ccc" />
        <path d="M3.5 9L5.500 4l2 5M4 7.500h3M9.500 1v11.500M8 1h3M8 12.500h3" stroke="#4cb3ea" />
      </>
    ),
  },
  {
    name: "共享",
    art: (
      <>
        <path d="M5 3H3.5A1.500 1.500 0 0 0 2 4.500v6A1.500 1.500 0 0 0 3.500 12h6a1.500 1.500 0 0 0 1.500-1.500V9" stroke="#666" />
        <path d="M4.5 9c0-3 2-4 4-4V2.500L12 6 8.500 9V7c-2 0-3 .5-4 2z" stroke="#2d5f7c" />
      </>
    ),
  },
  {
    name: "删除",
    art: <path d="M1 3h11M4.5 3c0-2.500 4-2.500 4 0M2.500 3l.7 8.500h6.600l.7-8.500M5.500 5.500v4M7.500 5.500v4" stroke="#ccc" />,
  },
];

const files = [
  { name: ["imagesTr"], active: true },
  { name: ["labelsTr_autoch", "thon"] },
  { name: ["labelsTr_iliopso", "as"] },
  { name: ["labelsTr_T"] },
  { name: ["labelsTr_tissue"] },
];

const Rule = () => <span className="h-6 w-px bg-[#333]" />;

const Explorer = () => (
  <section className="mr-1 flex min-h-0 flex-1 flex-col overflow-hidden rounded-lg border-t border-l border-[#4a2030] bg-[#191919] font-['Noto_Sans','Noto_Sans_CJK_SC',sans-serif] text-[10px] leading-3 text-[#eee]">
    <div className="flex h-[30px] shrink-0 items-end pl-1.5">
      <div className="flex h-6 w-[186px] items-center gap-2 rounded-t-md bg-[#272727] px-[7px] font-medium">
        <Svg w={12} h={10}>
          <path d="M0 1a1 1 0 0 1 1-1h3l2 1.5h5a1 1 0 0 1 1 1V9a1 1 0 0 1-1 1H1a1 1 0 0 1-1-1z" fill="#e9b33a" />
          <path d="M0 3.5h12V9a1 1 0 0 1-1 1H1a1 1 0 0 1-1-1z" fill="#f6d065" />
        </Svg>
        新建文件夹
        <button aria-label="关闭标签页" className="ml-auto p-1">
          <X size={10} strokeWidth={2} />
        </button>
      </div>
      <button aria-label="新标签页" className="ml-3 flex h-6 items-center">
        <Plus size={12} strokeWidth={2} />
      </button>
      <div className="ml-auto flex h-7 items-start pt-1 text-[#777]">
        <button aria-label="最小化" className="flex w-9 justify-center"><Minus size={11} /></button>
        <button aria-label="最大化" className="flex w-9 justify-center"><Square size={10} /></button>
        <button aria-label="关闭" className="flex w-9 justify-center"><X size={12} /></button>
      </div>
    </div>

    <div className="flex h-[39px] shrink-0 items-center gap-[7px] bg-linear-to-b from-[#272727] to-[#2d2d2d] pr-2 pl-0.5">
      <div className="flex w-[147px] shrink-0">
        <button aria-label="后退" className="flex flex-1 justify-center text-[#666]"><ArrowLeft size={14} strokeWidth={2} /></button>
        <button aria-label="前进" className="flex flex-1 justify-center text-[#ccc]"><ArrowRight size={14} strokeWidth={2} /></button>
        <button aria-label="向上" className="flex flex-1 justify-center text-[#ccc]"><ArrowUp size={14} strokeWidth={2} /></button>
        <button aria-label="刷新" className="flex flex-1 items-center justify-center text-[#ccc]"><RotateCw size={12} strokeWidth={2} /></button>
      </div>
      <div className="flex h-[25px] min-w-0 flex-1 items-center gap-3 rounded-sm bg-[#383838] px-2.5 text-[11px]">
        <Svg w={13} h={13}>
          <rect x="0.5" y="1" width="12" height="9" rx="1.5" stroke="#ccc" />
          <path d="M3 12h7M5 10v2M8 10v2" stroke="#ccc" />
        </Svg>
        <ChevronRight size={11} strokeWidth={3} />
        <a href="#" className="whitespace-nowrap">新建文件夹</a>
        <ChevronRight size={11} strokeWidth={3} />
      </div>
      <div className="flex h-[25px] w-[318px] shrink-0 items-center rounded-sm bg-[#383838] pr-2.5 pl-[11px]">
        <input
          aria-label="搜索"
          placeholder="在 新建文件夹 中搜索"
          className="min-w-0 flex-1 bg-transparent text-[11px] outline-none placeholder:text-[#ccc]"
        />
        <Search size={11} strokeWidth={2} />
      </div>
    </div>

    <div className="flex h-9 shrink-0 items-center border-b border-[#303030] pr-4 pl-[13px]">
      <button className="flex w-[60px] items-center gap-[5px]">
        <Svg w={13} h={13}>
          <circle cx="6.5" cy="6.5" r="5.7" stroke="#ddd" />
          <path d="M6.5 3.500v6M3.500 6.500h6" stroke="#4cb3ea" />
        </Svg>
        新建
        <ChevronDown size={8} />
      </button>
      <Rule />
      <div className="flex pl-0.5">
        {commands.map((c) => (
          <button key={c.name} aria-label={c.name} className="flex w-[37px] justify-center">
            <Svg w={14} h={14}>{c.art}</Svg>
          </button>
        ))}
      </div>
      <span className="w-0.5" />
      <Rule />
      <button className="flex w-[61px] items-center justify-end gap-1">
        <Svg w={14} h={13}>
          <path d="M4 12V2M1.5 4.500L4 2l2.500 2.500" stroke="#ddd" />
          <path d="M10 1v10M7.5 8.500L10 11l2.500-2.500" stroke="#4cb3ea" />
        </Svg>
        排序
        <ChevronDown size={8} />
      </button>
      <button className="flex w-[69px] items-center justify-end gap-1">
        <Svg w={13} h={13}>
          <rect x="1.5" y="1.5" width="9" height="7.5" rx="1" stroke="#ddd" />
          <path d="M2 11.5h8" stroke="#ddd" />
        </Svg>
        查看
        <ChevronDown size={8} />
      </button>
      <span className="w-2.5" />
      <Rule />
      <button aria-label="更多" className="ml-3">
        <Svg w={13} h={4}>
          <circle cx="1.7" cy="2" r="1.4" fill="#eee" />
          <circle cx="6.5" cy="2" r="1.4" fill="#eee" />
          <circle cx="11.3" cy="2" r="1.4" fill="#eee" />
        </Svg>
      </button>
      <button className="ml-auto flex items-center gap-1.5">
        <Svg w={13} h={11}>
          <path d="M8 1H2a1 1 0 0 0-1 1v7a1 1 0 0 0 1 1h6z" stroke="#ccc" />
          <path d="M8 1h3a1 1 0 0 1 1 1v7a1 1 0 0 1-1 1H8zM10 3v1M10 6v2" stroke="#4cb3ea" />
        </Svg>
        详细信息
      </button>
    </div>

    <div className="flex min-h-0 flex-1 overflow-hidden">
      <nav className="flex w-[136px] shrink-0 gap-1.5 overflow-hidden border-r border-[#2c2c2c] pt-[5px] pl-px">
        <div className="w-[119px]">
          <a href="#" className="flex h-6 items-center gap-[3px] rounded-sm bg-[#323232] pl-6">
            <Svg w={13} h={13}>
              <path d="M1.5 6L6.500 2l5 4v6.500h-3.300V8.500H4.800v4H1.500z" fill="#ddd" />
              <path d="M0.5 7L6.500 1.500l6 5.500" stroke="#e07b2f" strokeWidth="1.5" />
            </Svg>
            主文件夹
          </a>
          <a href="#" className="flex h-6 items-center gap-[3px] pl-6">
            <Svg w={13} h={13}>
              <rect width="12" height="12" rx="1" fill="#1874d1" />
              <path d="M1 11l4-5 3 3 1-1 2 3z" fill="#fff" />
              <circle cx="8.5" cy="3.5" r="1.3" fill="#bfe1ff" />
            </Svg>
            图库
          </a>
          <hr className="mx-1.5 mt-3.5 mb-3 border-[#3a3a3a]" />
          <a href="#" className="flex h-6 items-center gap-[3px] pr-0.5 pl-6">
            <Svg w={13} h={10}>
              <rect width="13" height="10" rx="1" fill="#27a9d8" />
              <path d="M2 2h1M2 4h1M4 2h1" stroke="#fff" />
            </Svg>
            桌面
            <span className="ml-auto">
              <Svg w={9} h={9}>
                <path d="M5 0l4 4-2 .5-1.500 2L5 8 1 4l1.500-.5 2-1.500zM2.500 6L0 9" fill="#8c9499" stroke="#8c9499" />
              </Svg>
            </span>
          </a>
        </div>
        <span className="mt-2 h-3 w-0.5 rounded-full bg-[#888]" />
      </nav>
      <main className="flex min-w-0 flex-1 gap-1.5 overflow-hidden pl-3">
        {files.map((f) => (
          <button
            key={f.name[0]}
            className={`flex w-20 shrink-0 flex-col items-center self-start pt-0.5 pb-0.5 ${f.active ? "bg-[#333]" : ""}`}
          >
            <Folder />
            <span className="pt-3.5">
              {f.name.map((line) => (
                <span key={line} className="block">{line}</span>
              ))}
            </span>
          </button>
        ))}
      </main>
      <div className="mt-[21px] mr-1.5 h-[60px] w-0.5 shrink-0 bg-[#999]" />
      <aside className="flex w-[235px] shrink-0 items-start justify-center overflow-hidden border-l border-[#333] bg-[#222] pt-[58px]">
        <Folder />
      </aside>
    </div>
    <footer className="flex h-[19px] shrink-0 items-center gap-1.5 bg-[#1c1c1c] pr-[3px] pl-2.5 text-[#ddd]">
      <span>5 个项目</span>
      <span className="h-2.5 w-px bg-[#bbb]" />
      <span>选中 1 个项目</span>
      <span className="h-2.5 w-px bg-[#bbb]" />
      <div className="ml-auto flex items-center gap-1">
        <button aria-label="详细信息视图">
          <Svg w={12} h={12}>
            <path d="M0 0h12v12H0z" fill="#bbb" />
            <path d="M2 2.5h8M2 5h8M2 7.500h8M2 10h8" stroke="#333" />
          </Svg>
        </button>
        <button aria-label="大图标视图" className="flex h-[19px] w-[19px] items-center justify-center bg-[#555]">
          <Svg w={13} h={13}>
            <path d="M0 0h13v13H0z" fill="#bbb" />
            <path d="M2.5 2.500h8v7h-8z" fill="#fff" stroke="#222" />
          </Svg>
        </button>
      </div>
    </footer>
  </section>
);

const App: React.FC = () => {
  return (
    <div className="flex h-screen flex-col overflow-hidden bg-linear-to-r from-[#7a1450] to-[#3a0a06]">
      <div className="h-[3px] shrink-0 bg-[#1b0010]" />
      <div className="pl-px">
        <SlicerWindow />
      </div>
      <div className="flex min-h-0 flex-1 flex-col pt-px pl-0.5">
        <Explorer />
      </div>
    </div>
  );
};

export default App;
